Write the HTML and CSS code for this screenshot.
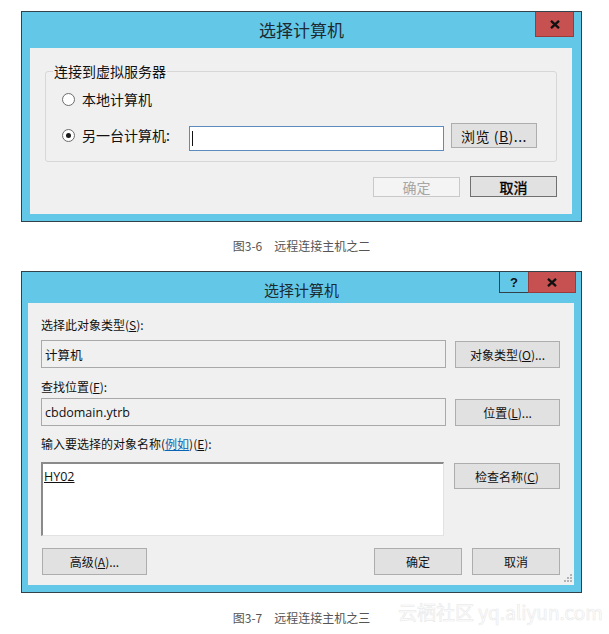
FILE: index.html
```html
<!DOCTYPE html>
<html lang="zh-CN">
<head>
<meta charset="utf-8">
<title>选择计算机</title>
<link rel="stylesheet" href="styles.css">
</head>
<body>
<div class="page">
  <div class="win win1">
    <div class="titlebar tb1">
      <div class="title t1">选择计算机</div>
      <div class="tbtns">
        <div class="close c1"><svg width="10" height="9" viewBox="0 0 10 9"><path d="M1 0.8 L9 8.2 M9 0.8 L1 8.2" stroke="#111" stroke-width="2.3" fill="none"/></svg></div>
      </div>
    </div>
    <div class="panel p1">
      <fieldset class="group">
        <legend>连接到虚拟服务器</legend>
        <div class="opt opt1">
          <span class="choice"><span class="radio"></span><span class="optlabel">本地计算机</span></span>
        </div>
        <div class="opt opt2">
          <span class="choice"><span class="radio on"></span><span class="optlabel">另一台计算机:</span></span>
          <div class="input"><span class="caret"></span></div>
          <div class="btn b1 browse">浏览 (<u>B</u>)...</div>
        </div>
      </fieldset>
      <div class="actions a1">
        <div class="btn b1 disabled">确定</div>
        <div class="btn b1 default">取消</div>
      </div>
    </div>
  </div>
  <div class="caption cap1">图3-6&emsp;远程连接主机之二</div>

  <div class="win win2">
    <div class="titlebar tb2">
      <div class="title t2">选择计算机</div>
      <div class="tbtns">
        <div class="help">?</div>
        <div class="close c2"><svg width="10" height="9" viewBox="0 0 10 9"><path d="M1 0.8 L9 8.2 M9 0.8 L1 8.2" stroke="#111" stroke-width="2.3" fill="none"/></svg></div>
      </div>
    </div>
    <div class="panel p2">
      <div class="lbl l1">选择此对象类型(<u>S</u>):</div>
      <div class="row r1">
        <div class="field">计算机</div>
        <div class="btn b2 side">对象类型(<u>O</u>)...</div>
      </div>
      <div class="lbl l2">查找位置(<u>F</u>):</div>
      <div class="row r2">
        <div class="field">cbdomain.ytrb</div>
        <div class="btn b2 side">位置(<u>L</u>)...</div>
      </div>
      <div class="lbl l3">输入要选择的对象名称(<span class="link">例如</span>)(<u>E</u>):</div>
      <div class="row r3">
        <div class="textarea"><u>HY02</u></div>
        <div class="btn b2 check">检查名称(<u>C</u>)</div>
      </div>
      <div class="row r4">
        <div class="btn b2 adv">高级(<u>A</u>)...</div>
        <div class="r4right">
          <div class="btn b2 ok2">确定</div>
          <div class="btn b2 ok2">取消</div>
        </div>
      </div>
      <svg class="grip" width="8" height="8" viewBox="0 0 8 8"><g fill="#b4b4b4"><rect x="6" y="0" width="2" height="2"/><rect x="3" y="3" width="2" height="2"/><rect x="6" y="3" width="2" height="2"/><rect x="0" y="6" width="2" height="2"/><rect x="3" y="6" width="2" height="2"/><rect x="6" y="6" width="2" height="2"/></g></svg>
    </div>
  </div>
  <div class="caprow">
    <div class="caption cap2">图3-7&emsp;远程连接主机之三</div>
    <div class="watermark">云栖社区 yq.aliyun.com</div>
  </div>
</div>
</body>
</html>
```

FILE: styles.css
```css
html, body {
  margin: 0;
  padding: 0;
  background: #ffffff;
}
body {
  font-family: "Noto Sans CJK SC", "Noto Sans", sans-serif;
  color: #111;
}
.page {
  width: 561px;
  margin-left: 21px;
  padding-top: 11px;
  display: flex;
  flex-direction: column;
}
.win {
  border: 1px solid #33424a;
  background: #63c8e8;
  display: flex;
  flex-direction: column;
  box-sizing: border-box;
}
.win1 { height: 211px; }
.win2 { height: 322px; margin-top: 17px; }

.titlebar {
  display: grid;
  grid-template-columns: 1fr auto 1fr;
  align-items: start;
}
.tb1 { height: 36px; }
.tb2 { height: 31px; }
.title {
  grid-column: 2;
  color: #1d2a30;
  white-space: nowrap;
  align-self: center;
}
.t1 { font-size: 17px; line-height: 22px; }
.t2 { font-size: 15px; line-height: 20px; padding-top: 4px; }
.tbtns {
  grid-column: 3;
  justify-self: end;
  display: flex;
}
.close {
  background: #c75050;
  border: 1px solid #9a3b3b;
  border-top: none;
  box-sizing: border-box;
  display: flex;
  align-items: center;
  justify-content: center;
}
.c1 { width: 39px; height: 25px; margin-right: 7px; }
.c2 { width: 48px; height: 21px; margin-right: 5px; }
.help {
  width: 29px;
  height: 21px;
  box-sizing: border-box;
  border: 1px solid #33424a;
  border-top: none;
  border-right: none;
  display: flex;
  align-items: center;
  justify-content: center;
  font-family: "Liberation Sans", sans-serif;
  font-weight: bold;
  font-size: 13px;
  color: #111;
}

.panel {
  background: #f0f0f0;
  display: flex;
  flex-direction: column;
  box-sizing: border-box;
}
.p1 {
  height: 166px;
  margin: 0 9px 0 8px;
  padding-bottom: 17px;
  font-size: 14px;
}
.p2 {
  position: relative;
  height: 282px;
  margin: 0 7px 0 6px;
  padding: 0 14px 10px 13px;
  font-size: 12px;
}

/* dialog 1 */
.group {
  margin: 14px 15px 0 15px;
  padding: 0 0 10px 0;
  border: 1px solid #d7d7d7;
  border-radius: 3px;
  min-inline-size: 0;
}
.group legend {
  margin-left: 7px;
  padding: 0 1px;
  font-size: 14px;
  line-height: 18px;
  color: #111;
}
.opt {
  display: flex;
  align-items: flex-start;
  padding-left: 16px;
}
.opt1 { margin-top: 10px; height: 18px; }
.opt2 { margin-top: 15px; height: 28px; }
.choice {
  display: flex;
  align-items: center;
  height: 18px;
  line-height: 18px;
}
.opt2 .choice { margin-top: 3px; }
.radio {
  width: 13px;
  height: 13px;
  box-sizing: border-box;
  border: 1px solid #6c6c6c;
  border-radius: 50%;
  background: #ffffff;
  display: flex;
  align-items: center;
  justify-content: center;
  flex: 0 0 13px;
}
.radio.on::after {
  content: "";
  width: 5px;
  height: 5px;
  border-radius: 50%;
  background: #1a1a1a;
}
.optlabel { margin-left: 7px; white-space: nowrap; }
.opt2 .optlabel { width: 100px; }
.input {
  margin-left: 7px;
  margin-top: 3px;
  width: 255px;
  height: 25px;
  box-sizing: border-box;
  border: 1px solid #5a8dbd;
  background: #ffffff;
  display: flex;
  align-items: center;
  padding-left: 2px;
}
.caret {
  width: 1px;
  height: 15px;
  background: #111;
}
.btn {
  box-sizing: border-box;
  display: flex;
  align-items: center;
  justify-content: center;
  white-space: nowrap;
  background: #e1e1e1;
  border: 1px solid #adadad;
  color: #111;
}
.b1 { font-size: 14px; height: 21px; width: 87px; }
.browse { margin-left: 7px; height: 25px; width: 86px; letter-spacing: 0.5px; }
.actions {
  display: flex;
  justify-content: flex-end;
  gap: 10px;
  margin-top: 14px;
  padding-right: 15px;
}
.disabled {
  background: #f4f4f4;
  border-color: #c9c9c9;
  color: #a6a6a6;
  margin-top: 1px;
  height: 20px;
}
.default {
  border-color: #707070;
  color: #000;
  -webkit-text-stroke: 0.35px #000;
}

.caption {
  font-size: 12px;
  line-height: 16px;
  color: #555;
  text-align: center;
  white-space: nowrap;
}
.cap1 { margin-top: 16px; }

/* dialog 2 */
.lbl { line-height: 16px; white-space: nowrap; }
.l1 { margin-top: 14px; }
.l2 { margin-top: 11px; }
.l3 { margin-top: 10px; }
.link { color: #0a64b4; text-decoration: underline; }
.row { display: flex; align-items: flex-start; }
.r1 { margin-top: 7px; height: 28px; }
.r2 { margin-top: 3px; height: 28px; }
.r3 { margin-top: 10px; height: 74px; }
.r4 { margin-top: 12px; height: 27px; justify-content: space-between; }
.field {
  width: 405px;
  height: 28px;
  box-sizing: border-box;
  border: 1px solid #a9a9a9;
  background: #f0f0f0;
  padding-left: 3px;
  display: flex;
  align-items: center;
  font-family: "Open Sans", "Noto Sans CJK SC", sans-serif;
  font-size: 12.5px;
}
.b2 { font-size: 12px; height: 27px; }
.side { width: 105px; margin-left: 9px; margin-top: 1px; }
.textarea {
  width: 403px;
  height: 74px;
  box-sizing: border-box;
  background: #ffffff;
  border-top: 2px solid #8a8a8a;
  border-left: 2px solid #8a8a8a;
  border-right: 1px solid #e2e2e2;
  border-bottom: 1px solid #e2e2e2;
  padding: 5px 0 0 1px;
  font-family: "Open Sans", sans-serif;
  font-size: 12.5px;
  line-height: 16px;
}
.check { width: 106px; height: 26px; margin-left: 10px; margin-top: 1px; }
.adv { width: 105px; margin-left: 1px; }
.r4right { display: flex; gap: 10px; }
.ok2 { width: 88px; }
.grip { position: absolute; right: 2px; bottom: 3px; }

.caprow {
  position: relative;
  margin-top: 17px;
}
.watermark {
  position: absolute;
  left: 377px;
  top: -10px;
  font-size: 19px;
  line-height: 24px;
  white-space: nowrap;
  color: #ffffff;
  -webkit-text-stroke: 0.7px #ebebeb;
  font-family: "Noto Sans CJK SC", "Noto Sans", sans-serif;
}
```
